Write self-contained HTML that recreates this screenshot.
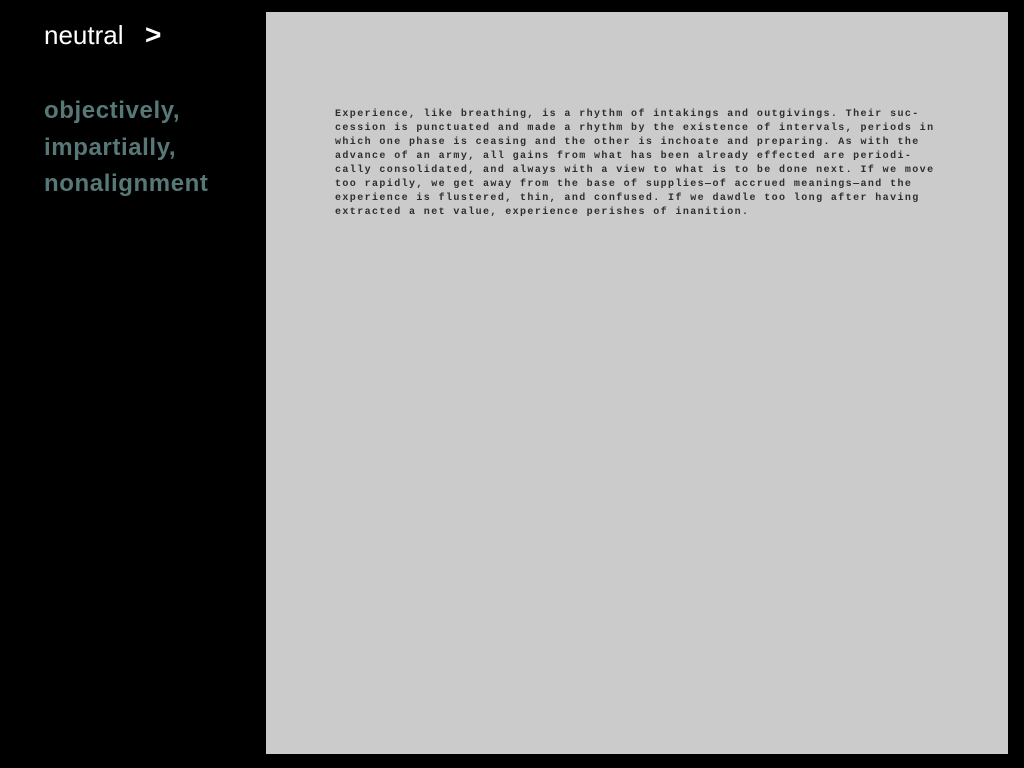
<!DOCTYPE html>
<html><head><meta charset="utf-8"><style>
html,body{margin:0;padding:0;background:#000;width:1024px;height:768px;overflow:hidden;position:relative}
.t{position:absolute;left:44px;top:20px;color:#fff;font:26px "Liberation Sans",sans-serif;letter-spacing:0}
.t b{position:absolute;left:101px;top:-1px;font-size:28px;font-weight:bold}
.w{position:absolute;left:44px;color:#587878;font:bold 24px "Liberation Sans",sans-serif;letter-spacing:0.6px}
.p{position:absolute;left:266px;top:12px;width:742px;height:742px;background:#cbcbcb}
.x{position:absolute;left:335px;top:108px;font:10px/14px "Liberation Mono",monospace;letter-spacing:1.4px;color:#2e2e2e;white-space:pre;font-weight:bold}
</style></head><body>
<div class="t">neutral<b>&gt;</b></div>
<div class="w" style="top:97px">objectively,</div>
<div class="w" style="top:134px">impartially,</div>
<div class="w" style="top:170px">nonalignment</div>
<div class="p"></div>
<div class="x">Experience, like breathing, is a rhythm of intakings and outgivings. Their suc-
cession is punctuated and made a rhythm by the existence of intervals, periods in
which one phase is ceasing and the other is inchoate and preparing. As with the
advance of an army, all gains from what has been already effected are periodi-
cally consolidated, and always with a view to what is to be done next. If we move
too rapidly, we get away from the base of supplies—of accrued meanings—and the
experience is flustered, thin, and confused. If we dawdle too long after having
extracted a net value, experience perishes of inanition.</div>
</body></html>
